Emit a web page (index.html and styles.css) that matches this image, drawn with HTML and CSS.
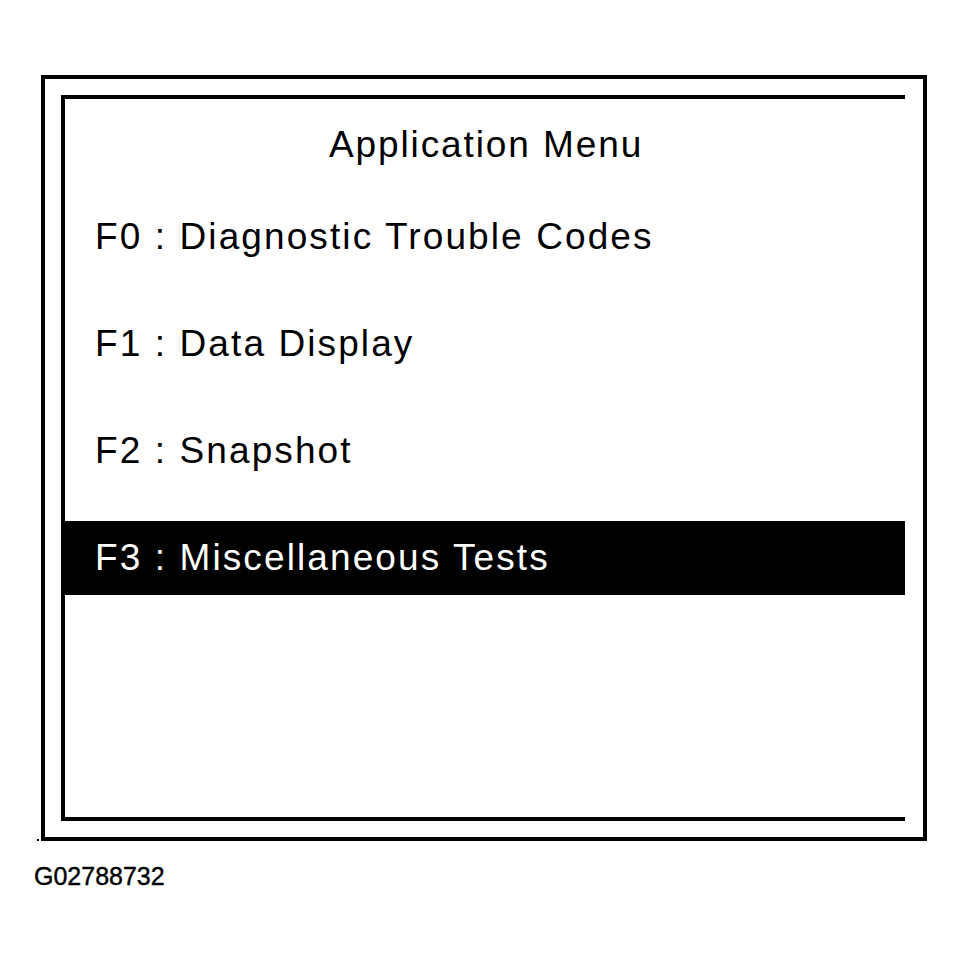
FILE: index.html
```html
<!DOCTYPE html>
<html lang="en">
<head>
<meta charset="utf-8">
<title>Application Menu</title>
<link rel="stylesheet" href="styles.css">
</head>
<body>
<div class="figure">
  <div class="outer">
    <div class="screen">
      <div class="title">Application Menu</div>
      <ul class="menu">
        <li class="item">F0 : Diagnostic Trouble Codes</li>
        <li class="item">F1 : Data Display</li>
        <li class="item">F2 : Snapshot</li>
        <li class="item selected">F3 : Miscellaneous Tests</li>
      </ul>
    </div>
    <span class="speck"></span>
  </div>
  <div class="caption">G02788732</div>
</div>
</body>
</html>
```

FILE: styles.css
```css
html, body {
  margin: 0;
  padding: 0;
  background: #ffffff;
}

body {
  font-family: "Liberation Sans", Arial, sans-serif;
  color: #000000;
}

.figure {
  padding: 75px 0 0 41px;
}

.outer {
  position: relative;
  box-sizing: border-box;
  width: 886px;
  height: 766px;
  border: 4px solid #000000;
  padding: 16px 18px 16px 16px;
}

.screen {
  box-sizing: border-box;
  width: 844px;
  height: 726px;
  border-top: 4px solid #000000;
  border-bottom: 4px solid #000000;
  border-left: 4px solid #000000;
  display: flex;
  flex-direction: column;
}

.title {
  margin-top: 9px;
  height: 74px;
  line-height: 74px;
  font-size: 37px;
  letter-spacing: 1.9px;
  text-align: center;
  padding-left: 2px;
}

.menu {
  list-style: none;
  margin: 18px 0 0 0;
  padding: 0;
  display: flex;
  flex-direction: column;
  gap: 33px;
}

.item {
  height: 74px;
  line-height: 74px;
  font-size: 37px;
  letter-spacing: 2.1px;
  padding-left: 30px;
  white-space: nowrap;
}

.item.selected {
  background: #000000;
  color: #ffffff;
}

.speck {
  position: absolute;
  left: -8px;
  bottom: -4px;
  width: 2px;
  height: 2px;
  background: #000000;
}

.caption {
  margin: 20px 0 0 -7px;
  font-size: 25px;
  line-height: 30px;
  -webkit-text-stroke: 0.4px #000000;
}
```
